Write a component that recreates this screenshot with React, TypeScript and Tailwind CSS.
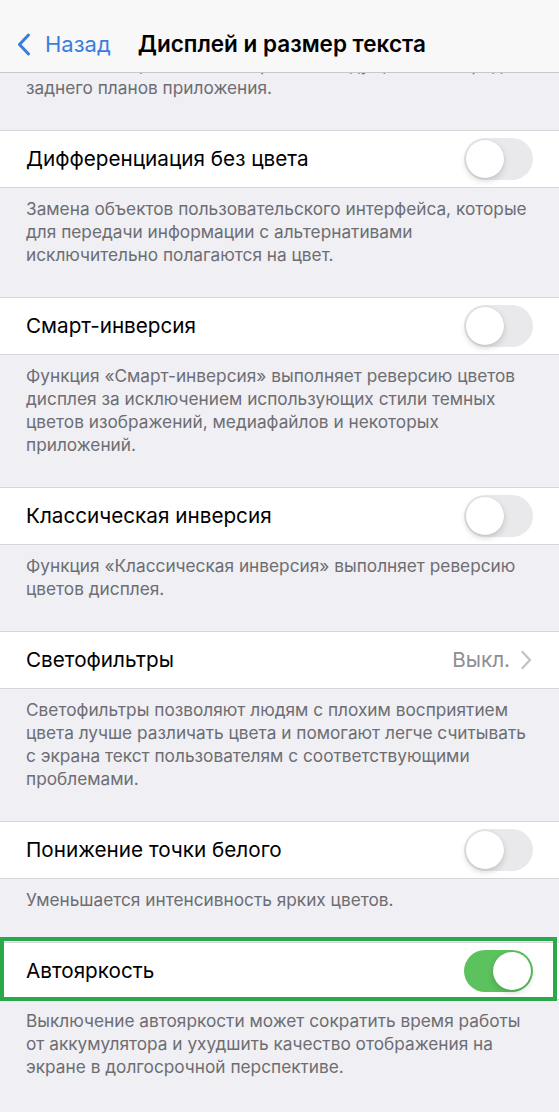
import { ReactNode } from "react";

type Row = {
  label: string;
  footer: string[];
  kind: "toggle" | "link";
  on?: boolean;
  value?: string;
  highlight?: boolean;
};

const rows: Row[] = [
  {
    label: "Дифференциация без цвета",
    kind: "toggle",
    footer: [
      "Замена объектов пользовательского интерфейса, которые",
      "для передачи информации с альтернативами",
      "исключительно полагаются на цвет.",
    ],
  },
  {
    label: "Смарт-инверсия",
    kind: "toggle",
    footer: [
      "Функция «Смарт-инверсия» выполняет реверсию цветов",
      "дисплея за исключением использующих стили темных",
      "цветов изображений, медиафайлов и некоторых",
      "приложений.",
    ],
  },
  {
    label: "Классическая инверсия",
    kind: "toggle",
    footer: [
      "Функция «Классическая инверсия» выполняет реверсию",
      "цветов дисплея.",
    ],
  },
  {
    label: "Светофильтры",
    kind: "link",
    value: "Выкл.",
    footer: [
      "Светофильтры позволяют людям с плохим восприятием",
      "цвета лучше различать цвета и помогают легче считывать",
      "с экрана текст пользователям с соответствующими",
      "проблемами.",
    ],
  },
  {
    label: "Понижение точки белого",
    kind: "toggle",
    footer: ["Уменьшается интенсивность ярких цветов."],
  },
  {
    label: "Автояркость",
    kind: "toggle",
    on: true,
    highlight: true,
    footer: [
      "Выключение автояркости может сократить время работы",
      "от аккумулятора и ухудшить качество отображения на",
      "экране в долгосрочной перспективе.",
    ],
  },
];

function Toggle({ on }: { on?: boolean }) {
  return (
    <div
      className={`flex h-[42px] w-[69px] items-center rounded-full p-[2px] ${
        on ? "justify-end bg-[#5bc25e]" : "justify-start bg-[#e9e9eb]"
      }`}
    >
      <div className="h-[38px] w-[38px] rounded-full bg-white shadow-[0_3px_6px_rgba(0,0,0,0.16),0_0_0_0.5px_rgba(0,0,0,0.06)]" />
    </div>
  );
}

function Footer({ lines, className = "" }: { lines: string[]; className?: string }) {
  return (
    <div className={`px-[26px] text-[17.25px] leading-[23px] text-[#6d6d72] ${className}`}>
      {lines.map((l) => (
        <p key={l} className="whitespace-nowrap">
          {l}
        </p>
      ))}
    </div>
  );
}

function Cell({ row }: { row: Row }): ReactNode {
  return (
    <div className="relative">
      <div className="flex h-[58px] items-center justify-between border-y border-[#d6d6da] bg-white pl-[26px] pr-[26px]">
        <span className="text-[20.7px] text-black">{row.label}</span>
        {row.kind === "toggle" ? (
          <Toggle on={row.on} />
        ) : (
          <div className="flex items-center gap-[10px]">
            <span className="text-[20.7px] text-[#8e8e93]">{row.value}</span>
            <svg width="13" height="22" viewBox="0 0 13 22" fill="none">
              <path d="M2.5 3 L10 11 L2.5 19" stroke="#c4c4c7" strokeWidth="2.4" strokeLinecap="round" strokeLinejoin="round" />
            </svg>
          </div>
        )}
      </div>
      {row.highlight && (
        <div className="pointer-events-none absolute -top-[5px] -bottom-[1px] left-0 right-[2px] border-[4px] border-[#2aa84a]" />
      )}
    </div>
  );
}

export default function App() {
  return (
    <div
      className="min-h-[1112px] w-[559px] bg-[#efeff4]"
      style={{ fontFamily: 'Inter, "Noto Sans", sans-serif' }}
    >
      <header className="flex h-[73px] items-center border-b border-[#c8c7cc] bg-[#f8f8f8] pt-[16px]">
        <div className="flex items-center pl-[17px]">
          <svg width="14" height="23" viewBox="0 0 14 23" fill="none">
            <path d="M11.5 2 L2.5 11.5 L11.5 21" stroke="#3a7de0" strokeWidth="3" strokeLinecap="round" strokeLinejoin="round" />
          </svg>
          <span className="ml-[14px] text-[22px] text-[#3a7de0]">Назад</span>
        </div>
        <h1 className="ml-[27px] text-[22.5px] font-semibold text-black">Дисплей и размер текста</h1>
      </header>

      <div className="h-[57px] overflow-hidden">
        <Footer
          className="-mt-[20px]"
          lines={["Увеличение цветового контраста между цветами переднего и", "заднего планов приложения."]}
        />
      </div>

      {rows.map((row) => (
        <div key={row.label}>
          <Cell row={row} />
          <Footer lines={row.footer} className="pt-[9px] pb-[31px]" />
        </div>
      ))}
    </div>
  );
}
